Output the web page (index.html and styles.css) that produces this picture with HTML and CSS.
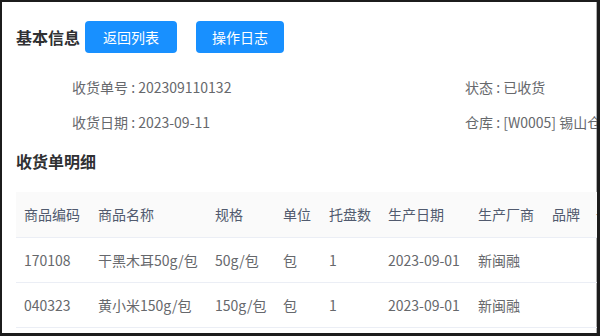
FILE: index.html
```html
<!DOCTYPE html>
<html lang="zh-CN">
<head>
<meta charset="utf-8">
<link rel="stylesheet" href="styles.css">
</head>
<body>
<div class="frame">
  <div class="content">
    <div class="head">
      <h2 class="title">基本信息</h2>
      <button class="btn">返回列表</button>
      <button class="btn">操作日志</button>
    </div>
    <div class="info">
      <div class="item">收货单号 : 202309110132</div>
      <div class="item">状态 : 已收货</div>
      <div class="item">收货日期 : 2023-09-11</div>
      <div class="item">仓库 : [W0005] 锡山仓库</div>
    </div>
    <h2 class="title sub">收货单明细</h2>
    <table class="grid">
      <colgroup>
        <col style="width:74px"><col style="width:117px"><col style="width:68px"><col style="width:46px"><col style="width:59px"><col style="width:90px"><col style="width:74px"><col style="width:44px"><col style="width:80px">
      </colgroup>
      <thead>
        <tr><th>商品编码</th><th>商品名称</th><th>规格</th><th>单位</th><th>托盘数</th><th>生产日期</th><th>生产厂商</th><th>品牌</th><th>备注</th></tr>
      </thead>
      <tbody>
        <tr><td>170108</td><td>干黑木耳50g/包</td><td>50g/包</td><td>包</td><td>1</td><td>2023-09-01</td><td>新闽融</td><td></td><td></td></tr>
        <tr><td>040323</td><td>黄小米150g/包</td><td>150g/包</td><td>包</td><td>1</td><td>2023-09-01</td><td>新闽融</td><td></td><td></td></tr>
      </tbody>
    </table>
  </div>
</div>
</body>
</html>
```

FILE: styles.css
```css
* { box-sizing: border-box; }
html, body { margin: 0; padding: 0; background: #fff; }
body { font-family: "Noto Sans CJK SC", "Noto Sans", sans-serif; color: #66686c; }
.frame {
  width: 600px;
  height: 336px;
  border-style: solid;
  border-color: #1c1c1c;
  border-width: 2px 3px 3px 2px;
  overflow: hidden;
  box-shadow: inset -1px 0 0 #b0b0b0;
}
.content { padding: 19px 0 0 14px; width: 900px; }
.head { display: flex; align-items: center; height: 32px; }
.title { margin: 0; font-size: 16px; font-weight: bold; color: #303133; line-height: 24px; }
.btn {
  display: flex;
  align-items: center;
  justify-content: center;
  height: 32px;
  border: 0;
  border-radius: 4px;
  background: #1890ff;
  color: #fff;
  font-family: inherit;
  font-size: 14px;
  padding: 0;
  margin-left: 5px;
  width: 92px;
  white-space: nowrap;
}
.btn + .btn { margin-left: 19px; width: 88px; }
.info {
  display: grid;
  grid-template-columns: 393px 200px;
  margin-top: 17px;
  padding-left: 56px;
}
.item { height: 35px; line-height: 35px; font-size: 14px; white-space: nowrap; }
.sub { margin-top: 9px; }
.grid {
  margin-top: 19px;
  table-layout: fixed;
  width: 652px;
  border-collapse: collapse;
  font-size: 14px;
}
.grid th, .grid td {
  text-align: left;
  padding: 0 8px;
  white-space: nowrap;
  overflow: hidden;
  border-bottom: 1px solid #ebeef5;
}
.grid th { height: 45px; background: #fafafa; font-weight: normal; color: #515a6e; }
.grid td { height: 45px; }
```
